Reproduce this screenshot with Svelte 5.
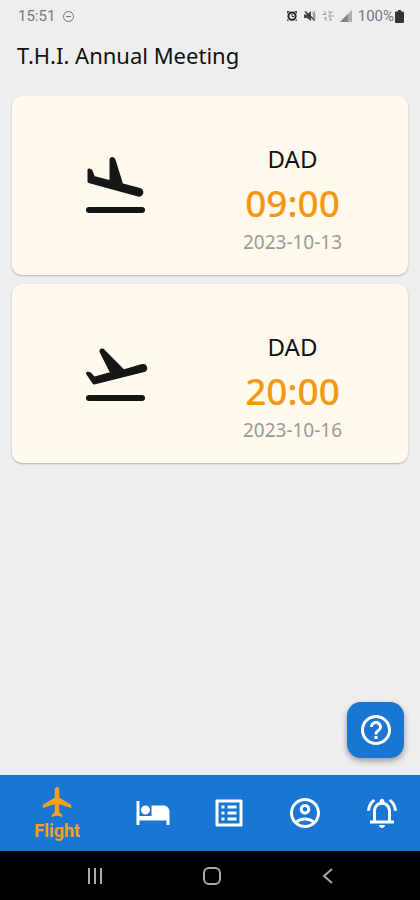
<script>
  let active = 'Flight';

  const flights = [
    { kind: 'landing', airport: 'DAD', time: '09:00', date: '2023-10-13' },
    { kind: 'takeoff', airport: 'DAD', time: '20:00', date: '2023-10-16' }
  ];

  const tabs = ['Flight', 'Hotel', 'Agenda', 'Profile', 'Notifications'];
</script>

<div class="app">
  <div class="status-bar">
    <div class="status-group">
      <span>15:51</span>
      <svg class="dnd" width="13" height="13" viewBox="0 0 13 13">
        <circle cx="6.5" cy="6.5" r="5" />
        <path d="M4 6.5h5" />
      </svg>
    </div>
    <div class="status-group right">
      <svg width="12" height="12" viewBox="0 0 12 12">
        <path d="M1 1h3L1 4zM11 1H8l3 3zM1 11h2L1 9zM11 11H9l2-2z" fill="#444" />
        <circle cx="6" cy="6.2" r="3.6" fill="none" stroke="#222" stroke-width="2" />
        <path d="M6 4v2.5h2" fill="none" stroke="#333" />
      </svg>
      <svg width="12" height="12" viewBox="0 0 12 12">
        <path d="M0 4.5h3L7 1v10L3 8H0z" fill="#444" />
        <path d="M1 1.5l10 9" stroke="#333" stroke-width="1.5" />
        <path d="M8.5 2.5q3 3.5 0 7M10 1q2 5 0 10" fill="none" stroke="#888" />
      </svg>
      <svg width="12" height="12" viewBox="0 0 12 12">
        <path d="M3 1v4M0.5 4.5h4M6 2h5M8 2v3M4 11V7l-2 2M8 7v4l2-2M6 6h6" fill="none" stroke="#999" />
      </svg>
      <svg width="12" height="12" viewBox="0 0 12 12">
        <path d="M0 12L12 0v12z" fill="#b0b0b0" />
        <path d="M0 12l8-8v8z" fill="#858585" />
      </svg>
      <span class="battery">
        100%
        <svg width="9" height="13" viewBox="0 0 9 13">
          <path d="M3 0h3v1.5h2q1 0 1 1V12q0 1-1 1H1q-1 0-1-1V2.5q0-1 1-1h2z" fill="#333" />
        </svg>
      </span>
    </div>
  </div>

  <header>
    <h1>T.H.I. Annual Meeting</h1>
  </header>

  <main>
    {#each flights as flight}
      <article class="card">
        <div class="col">
          <svg class="plane" width="72" height="72" viewBox="0 0 72 72">
            {#if flight.kind === 'landing'}
              <path d="M9 22l2 .8 2.500 6.700L31 34V12q0-1.500 1.300-1.500T34 12l7.700 24.800 18 4.700a2.800 2.800 0 0 1-1.400 5.600L9 33.500z" />
            {:else}
              <path d="M7.500 37.300l2.500.5 4 4.500 18-5L21 15.500q-.3-1.300.8-1.500 1-.2 1.700.8L43.500 35l19-5.500a2.600 2.600 0 0 1 1.400 5L14 47z" />
            {/if}
            <path class="ground" d="M9 62h53" />
          </svg>
        </div>
        <div class="col details">
          <div class="airport">{flight.airport}</div>
          <div class="time">{flight.time}</div>
          <div class="date">{flight.date}</div>
        </div>
      </article>
    {/each}

    <button class="help" aria-label="Help">
      <svg width="36" height="36" viewBox="0 0 24 24" fill="#fff">
        <path d="M11 18h2v-2h-2v2zm1-16C6.480 2 2 6.480 2 12s4.480 10 10 10 10-4.480 10-10S17.520 2 12 2zm0 18c-4.410 0-8-3.590-8-8s3.590-8 8-8 8 3.590 8 8-3.590 8-8 8zm0-14c-2.210 0-4 1.790-4 4h2c0-1.100.9-2 2-2s2 .9 2 2c0 2-3 1.750-3 5h2c0-2.250 3-2.500 3-5 0-2.210-1.790-4-4-4z" />
      </svg>
    </button>
  </main>

  <nav class="tabs">
    {#each tabs as tab}
      <button class="tab" class:active={tab === active} aria-label={tab} on:click={() => (active = tab)}>
        <svg width="36" height="36" viewBox="0 0 24 24">
          {#if tab === 'Flight'}
            <path d="M21.500 16v-2l-8-5V3.500c0-.83-.67-1.500-1.500-1.500s-1.500.67-1.500 1.500V9l-8 5v2l8-2.500V19l-2 1.500V22l3.500-1 3.500 1v-1.500l-2-1.500v-5.500l8 2.500z" />
          {:else if tab === 'Hotel'}
            <path d="M7 13c1.660 0 3-1.340 3-3S8.660 7 7 7s-3 1.340-3 3 1.340 3 3 3zm12-6h-8v7H3V4H1v16h2v-3h18v3h2v-9c0-2.210-1.790-4-4-4z" />
          {:else if tab === 'Agenda'}
            <path d="M11 7h6v2h-6V7zm0 4h6v2h-6v-2zm0 4h6v2h-6v-2zM7 7h2v2H7V7zm0 4h2v2H7v-2zm0 4h2v2H7v-2zM20.100 3H3.900c-.5 0-.9.4-.9.9v16.200c0 .4.4.9.9.9h16.200c.4 0 .9-.5.9-.9V3.900c0-.5-.5-.9-.9-.9zM19 19H5V5h14v14z" />
          {:else if tab === 'Profile'}
            <path d="M12 2C6.480 2 2 6.480 2 12s4.480 10 10 10 10-4.480 10-10S17.520 2 12 2zM7.350 18.500C8.660 17.560 10.260 17 12 17s3.340.560 4.650 1.500C15.340 19.440 13.740 20 12 20s-3.340-.560-4.650-1.500zm10.790-1.380C16.450 15.800 14.320 15 12 15s-4.450.8-6.140 2.120C4.700 15.730 4 13.950 4 12c0-4.420 3.580-8 8-8s8 3.580 8 8c0 1.950-.7 3.730-1.860 5.120z" />
            <path d="M12 6c-1.930 0-3.500 1.570-3.500 3.500S10.070 13 12 13s3.500-1.570 3.500-3.500S13.930 6 12 6zm0 5c-.83 0-1.500-.67-1.500-1.500S11.170 8 12 8s1.500.67 1.500 1.500S12.830 11 12 11z" />
          {:else}
            <path d="M12 22c1.100 0 2-.9 2-2h-4c0 1.100.9 2 2 2zm6-5v-6c0-3.070-1.630-5.640-4.500-6.320V4c0-.83-.67-1.500-1.500-1.500s-1.500.67-1.500 1.500v.68C7.640 5.360 6 7.920 6 11v6H4v2h16v-2h-2zm-2 0H8v-6c0-2.480 1.510-4.500 4-4.500s4 2.020 4 4.500v6zM7.580 4.080L6.150 2.650C3.750 4.480 2.170 7.300 2.030 10.500h2c.15-2.650 1.510-4.970 3.550-6.420zm12.390 6.420h2c-.15-3.200-1.730-6.020-4.120-7.850l-1.420 1.430c2.020 1.450 3.390 3.770 3.540 6.420z" />
          {/if}
        </svg>
        {#if tab === active}
          <span>{tab}</span>
        {/if}
      </button>
    {/each}
  </nav>

  <div class="system-nav">
    <button aria-label="Recent apps">
      <svg width="20" height="20" viewBox="0 0 20 20"><path d="M4 2v16M10 2v16M16 2v16" /></svg>
    </button>
    <button aria-label="Home">
      <svg width="20" height="20" viewBox="0 0 20 20"><rect x="2" y="2" width="16" height="16" rx="5" /></svg>
    </button>
    <button aria-label="Back">
      <svg width="20" height="20" viewBox="0 0 20 20"><path d="M14 3l-8 7 8 7" /></svg>
    </button>
  </div>
</div>

<style>
  :global(body) {
    background: #eee;
  }

  .app {
    display: flex;
    flex-direction: column;
    min-height: 100vh;
    background: #eee;
    font-family: 'Noto Sans', sans-serif;
    color: #111;
  }

  button {
    border: 0;
    padding: 0;
    cursor: pointer;
    font-family: inherit;
  }

  svg {
    display: block;
  }

  .status-bar {
    display: flex;
    justify-content: space-between;
    align-items: center;
    height: 32px;
    padding: 0 16px 0 18px;
    font-family: Roboto, sans-serif;
    font-size: 15px;
    color: #777;
  }

  .status-group {
    display: flex;
    align-items: center;
    gap: 7px;
  }

  .status-group.right {
    gap: 6px;
  }

  .battery {
    display: flex;
    align-items: center;
    gap: 1px;
  }

  .dnd {
    fill: none;
    stroke: #777;
  }

  header {
    padding: 7px 17px 24px;
  }

  h1 {
    margin: 0;
    font-size: 22px;
    line-height: 33px;
    font-weight: 400;
  }

  main {
    position: relative;
    flex: 1;
    display: flex;
    flex-direction: column;
    gap: 9px;
    padding: 0 12px;
  }

  .card {
    display: flex;
    align-items: center;
    padding: 42px 27px 17px 15px;
    border-radius: 10px;
    background: #fff9ee;
    box-shadow: 0 1px 2px rgba(0, 0, 0, 0.25);
  }

  .col {
    flex: 1;
    display: flex;
    flex-direction: column;
    align-items: center;
  }

  .plane {
    margin-bottom: 28px;
    fill: #161616;
    stroke: #161616;
    stroke-width: 3;
    stroke-linejoin: round;
  }

  .ground {
    stroke-width: 6;
    stroke-linecap: round;
  }

  .airport {
    font-size: 24px;
    line-height: 42px;
  }

  .time {
    font-size: 37px;
    line-height: 46px;
    font-weight: 500;
    color: #f7960f;
  }

  .date {
    font-size: 19px;
    line-height: 32px;
    color: #999;
  }

  .help {
    position: absolute;
    right: 16px;
    bottom: 17px;
    display: flex;
    align-items: center;
    justify-content: center;
    width: 57px;
    height: 56px;
    border-radius: 14px;
    background: #1976d2;
    box-shadow: 0 3px 6px rgba(0, 0, 0, 0.35);
  }

  .tabs {
    display: flex;
    height: 76px;
    background: #1976d2;
  }

  .tab {
    flex: 2;
    display: flex;
    flex-direction: column;
    align-items: center;
    justify-content: center;
    background: none;
    fill: #fff;
  }

  .tab.active {
    flex: 3;
    fill: #f9a01b;
    color: #f9a01b;
  }

  .tab span {
    font-family: Roboto, sans-serif;
    font-size: 18px;
    line-height: 22px;
    font-weight: 700;
  }

  .system-nav {
    display: flex;
    justify-content: center;
    height: 49px;
    padding-left: 3px;
    background: #000;
  }

  .system-nav button {
    width: 28%;
    display: flex;
    align-items: center;
    justify-content: center;
    background: none;
  }

  .system-nav svg {
    fill: none;
    stroke: #aaa;
    stroke-width: 2;
  }
</style>
